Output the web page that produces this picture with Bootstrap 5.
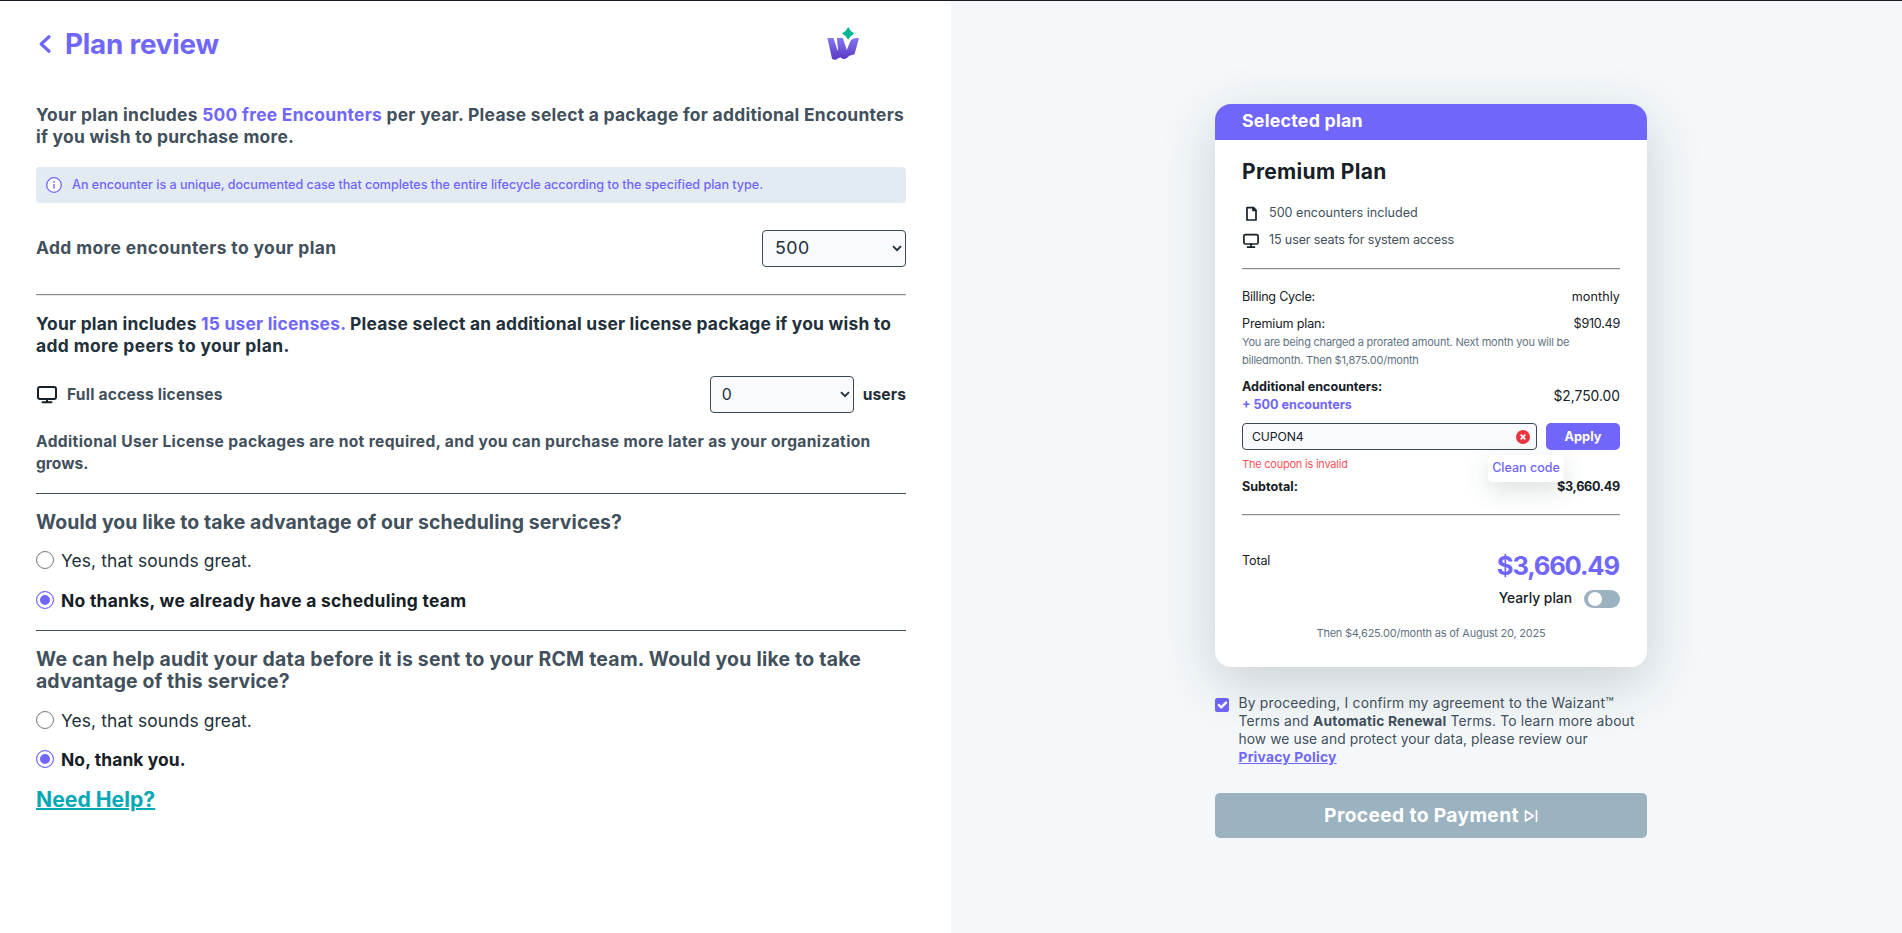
<!DOCTYPE html>
<html lang="en">
<head>
<meta charset="utf-8">
<meta name="viewport" content="width=device-width, initial-scale=1">
<title>Plan review</title>
<link href="https://cdn.jsdelivr.net/npm/bootstrap@5.3.0/dist/css/bootstrap.min.css" rel="stylesheet">
<style>
:root{--brand:#7166fa;--slate:#42505c;--ink:#22303a;--dark:#162026}
body{font-family:Inter,"Liberation Sans",sans-serif;color:var(--dark);background:#fff}
.screen{height:933px;border-top:1px solid #1d1a24;overflow:hidden}
.pane-left{width:951px;padding:19px 45px 0 36px}
.pane-right{width:951px;background:#f4f8fb;padding:103px 0 0 264px}
.c-brand{color:var(--brand)}.c-slate{color:var(--slate)}.c-ink{color:var(--ink)}.c-dark{color:var(--dark)}
/* vertical rhythm and tracking */
.mt-a{margin-top:17px}.mt-b{margin-top:18px}.mt-c{margin-top:19px}.mt-d{margin-top:20px}.mt-e{margin-top:21px}
.mt-f{margin-top:22px}.mt-g{margin-top:27px}.mt-h{margin-top:36px}.mt-s{margin-top:9px}.mt-xs{margin-top:5px}
.ls-n{letter-spacing:-.02em}.ls-m{letter-spacing:-.0125em}.ls-0{letter-spacing:0}.ls-1{letter-spacing:.006em}.ls-2{letter-spacing:.013em}.ls-3{letter-spacing:.0165em}.ls-4{letter-spacing:.0225em}
.page-head{height:48px}
.page-title{font-size:27.8px;font-weight:700;line-height:48px;letter-spacing:-.008em}
.back{margin-right:-1px}
.brand-mark{margin-right:47px}
.t18{font-size:17.4px;line-height:22px;font-weight:700}
.t16{font-size:15.6px;line-height:22px;font-weight:700}
.t20{font-size:19.4px;line-height:22px;font-weight:700}
.note{height:36px;background:#e2eaf2;border-radius:4px;font-size:12.6px;padding:0 10px;gap:10px;font-weight:500;letter-spacing:-.0025em}
.pick{width:144px;height:37px;border:1px solid #3c4955;border-radius:4px;background-color:#f8fafd;color:var(--ink);padding:0 24px 0 11px;font-size:15.8px;background-image:url("data:image/svg+xml,%3Csvg xmlns='http://www.w3.org/2000/svg' viewBox='0 0 10 7' fill='none' stroke='%2322303a' stroke-width='1.900'%3E%3Cpath d='M1 1.200l4 4 4-4'/%3E%3C/svg%3E");background-size:10px 7px;background-position:right 3px center}
.pick-lg{font-size:17.8px;padding-left:12px;letter-spacing:.03em}
.rule{height:2px;border-top:1px solid #8b8b8b;border-bottom:1px solid #e8e8e8}
.line{height:1px;background:#46535f}
.opt{height:18px;gap:7px;font-size:17.4px;line-height:18px;color:var(--ink)}
.opt .form-check-input{width:18px;height:18px;margin:0;flex:none;border:1px solid #767676}
.opt .form-check-input:checked{background-color:var(--brand);background-image:none;border-color:var(--brand);box-shadow:inset 0 0 0 3px #fff}
.opt label{padding-top:1px}
.seat-icon{margin-right:9px}
.users{margin-left:9px}
.up{margin-top:-2px}
.help{font-size:21.2px;line-height:24px;font-weight:700;color:#05a8b5;text-decoration-thickness:2px}
.plan{width:432px;height:563px;border:0;border-radius:16px;box-shadow:0 16px 56px rgba(25,45,50,.2)}
.plan-head{height:36px;background:var(--brand);color:#fff;font-weight:700;font-size:17.8px;line-height:34px;padding:0 27px;border-radius:16px 16px 0 0;letter-spacing:.013em}
.plan-body{padding:20px 27px 0}
.plan-name{font-size:21px;font-weight:700;line-height:24px;letter-spacing:.015em}
.t13{font-size:12.6px;line-height:18px}
.t11{font-size:11px;line-height:18px;color:#5f7383;letter-spacing:-.02em}
.t14{font-size:13.8px;line-height:18px}
.feat{gap:9px}
.feat svg{flex:none}
.coupon{height:27px;width:295px;border:1px solid #3c4955;border-radius:4px;background:#f8fafd;padding:0 6px 0 9px;font-size:12.2px;line-height:25px;letter-spacing:-.009em}
.btn-apply{width:74px;height:27px;background:var(--brand);color:#fff;border-radius:5px;font-size:12.8px;line-height:18px;padding:0}
.clean{top:32px;left:246px;width:76px;height:27px;border-radius:5px;font-size:12.5px;line-height:26px;box-shadow:0 8px 24px rgba(40,60,60,.16);z-index:2}
.err{color:#f5525a}
.total-row{margin-top:34px;height:30px}
.total{font-size:25.6px;line-height:31px;font-weight:700;letter-spacing:-.047em}
.total span{letter-spacing:0}
.total-label{padding-top:2px}
.toggle{width:36px;height:18px;border-radius:9px;background:#9bb2c0;padding:2px 4px;margin-top:1px}
.toggle i{width:14px;height:14px;border-radius:50%;background:#fff}
.after{margin-top:16px}
.terms{gap:9.5px;margin-top:27px;width:432px}
.terms .form-check-input{width:14px;height:14px;border-radius:2px;margin:4px 0 0;flex:none;background-size:16px 16px}
.terms .form-check-input:checked{background-color:var(--brand);border-color:var(--brand)}
.btn-pay{width:432px;height:45px;border-radius:5px;background:#9bb2c0;color:#fff;font-size:19.3px;padding:0;gap:5px;margin-top:27px;letter-spacing:.017em}
.btn-pay:hover,.btn-apply:hover{color:#fff}
</style>
</head>
<body>
<div class="screen d-flex">
<main class="pane-left">
  <header class="page-head d-flex align-items-center">
    <svg class="back" width="30" height="24" viewBox="0 0 30 24" fill="none" stroke="#7166fa" stroke-width="3.200" stroke-linecap="round" stroke-linejoin="round"><path d="M13 4.800 5.200 12l7.800 7.200"/></svg>
    <h1 class="page-title c-brand mb-0">Plan review</h1>
    <svg class="brand-mark ms-auto" width="32" height="34" viewBox="0 0 32 34"><defs><linearGradient id="wg" x1="0" y1="0" x2="0" y2="1"><stop offset="0" stop-color="#8577f0"/><stop offset="1" stop-color="#5a37c4"/></linearGradient></defs><path fill="url(#wg)" d="M.4 11H6.500l4 12.500.6-1.200L9.800 11h6l4 12L23 15c1.200-2.800 3-4 9-4l-4.400 16c-2.200 1.500-3.900.8-5.600 2-2.700 3.500-5.900 3.800-8.200 1.500-2.200.2-3 1.200-4.500 1.900-1.800.8-3.800.2-4.300-.8z"/><path fill="#06b794" d="M21.200 0q2 4.500 6.200 6.500-4.200 2-6.200 6.300Q19.200 8.500 15 6.500 19.200 4.500 21.200 0z"/></svg>
  </header>

  <p class="t18 c-slate ls-3 mt-h mb-0">Your plan includes <span class="c-brand">500 free Encounters</span> per year. Please select a package for additional Encounters<br>if you wish to purchase more.</p>
  <div class="note c-brand d-flex align-items-center mt-c">
    <svg width="16" height="16" viewBox="0 0 16 16"><circle cx="8" cy="8" r="7.300" fill="#fff" stroke="#7166fa" stroke-width="1.300"/><path d="M8 7v4.500" stroke="#7166fa" stroke-width="1.400"/><circle cx="8" cy="4.900" r=".9" fill="#7166fa"/></svg>
    <span>An encounter is a unique, documented case that completes the entire lifecycle according to the specified plan type.</span>
  </div>
  <div class="d-flex align-items-center justify-content-between mt-g">
    <label class="t18 c-slate ls-4 up" for="enc">Add more encounters to your plan</label>
    <select id="enc" class="form-select pick pick-lg"><option>500</option></select>
  </div>
  <div class="rule mt-g"></div>

  <p class="t18 c-ink ls-2 mt-a mb-0">Your plan includes <span class="c-brand">15 user licenses.</span> Please select an additional user license package if you wish to<br><span class="ls-4">add more peers to your plan.</span></p>
  <div class="d-flex align-items-center mt-c">
    <svg class="seat-icon" width="22" height="22" viewBox="0 0 22 22" fill="none" stroke="#162026" stroke-width="2" stroke-linecap="round"><rect x="2" y="3" width="18" height="12" rx="2"/><path d="M11 15v3M6.500 18.300h9"/></svg>
    <span class="t16 c-slate ls-2">Full access licenses</span>
    <select class="form-select pick ms-auto" aria-label="Users"><option>0</option></select>
    <span class="t16 c-ink ls-1 users">users</span>
  </div>
  <p class="t16 c-slate mt-b mb-0"><span class="ls-4">Additional User License packages are not required, and you can purchase more later as your organization</span><br><span class="ls-0">grows.</span></p>
  <div class="line mt-b"></div>

  <h2 class="t20 c-slate mt-a mb-0 ls-1">Would you like to take advantage of our scheduling services?</h2>
  <div class="opt d-flex mt-b"><input class="form-check-input" type="radio" name="sched" id="s1"><label class="ls-1" for="s1">Yes, that sounds great.</label></div>
  <div class="opt d-flex mt-f"><input class="form-check-input" type="radio" name="sched" id="s2" checked><label class="fw-bold c-dark ls-3" for="s2">No thanks, we already have a scheduling team</label></div>
  <div class="line mt-e"></div>

  <h2 class="t20 c-slate mt-a mb-0"><span class="ls-2">We can help audit your data before it is sent to your RCM team. Would you like to take</span><br><span class="ls-1">advantage of this service?</span></h2>
  <div class="opt d-flex mt-c"><input class="form-check-input" type="radio" name="audit" id="a1"><label class="ls-1" for="a1">Yes, that sounds great.</label></div>
  <div class="opt d-flex mt-e"><input class="form-check-input" type="radio" name="audit" id="a2" checked><label class="fw-bold c-dark ls-1" for="a2">No, thank you.</label></div>
  <a class="help d-inline-block mt-c" href="#">Need Help?</a>
</main>

<aside class="pane-right">
  <section class="card plan">
    <div class="plan-head">Selected plan</div>
    <div class="plan-body">
      <div class="plan-name">Premium Plan</div>
      <div class="t13 c-slate feat d-flex align-items-center mt-d">
        <svg width="18" height="18" viewBox="0 0 18 18" fill="none" stroke="#162026" stroke-width="1.700" stroke-linejoin="round"><path d="M5 3.700h6.500l2.500 2.500v9.800H5zM11 4v2.500h3"/></svg>
        <span>500 encounters included</span>
      </div>
      <div class="t13 c-slate feat d-flex align-items-center mt-s">
        <svg width="18" height="18" viewBox="0 0 18 18" fill="none" stroke="#162026" stroke-width="1.700" stroke-linecap="round"><rect x="1.900" y="3.700" width="14.200" height="9.300" rx="1.500"/><path d="M9 13v3M5.500 16.100h7"/></svg>
        <span class="ls-m">15 user seats for system access</span>
      </div>
      <div class="rule mt-c"></div>
      <div class="t13 d-flex justify-content-between mt-b"><span class="ls-n">Billing Cycle:</span><span class="ls-1">monthly</span></div>
      <div class="t13 d-flex justify-content-between mt-s"><span class="ls-m">Premium plan:</span><span class="ls-n">$910.49</span></div>
      <div class="t11 text-nowrap">You are being charged a prorated amount. Next month you will be<br>billedmonth. Then $1,875.00/month</div>
      <div class="t13 d-flex justify-content-between align-items-center mt-s">
        <div class="fw-bold">Additional encounters:<br><span class="c-brand">+ 500 encounters</span></div>
        <span class="t14">$2,750.00</span>
      </div>
      <div class="d-flex justify-content-between position-relative mt-s">
        <div class="coupon d-flex align-items-center justify-content-between">CUPON4
          <svg width="14" height="14" viewBox="0 0 14 14"><circle cx="7" cy="7" r="7" fill="#ea3440"/><path d="m4.700 4.700 4.600 4.600M9.300 4.700 4.700 9.300" stroke="#fff" stroke-width="1.700"/></svg>
        </div>
        <button class="btn btn-apply fw-bold">Apply</button>
        <div class="clean position-absolute bg-white text-center c-brand fw-medium">Clean code</div>
      </div>
      <div class="t11 err mt-xs">The coupon is invalid</div>
      <div class="t13 fw-bold d-flex justify-content-between mt-xs"><span>Subtotal:</span><span class="ls-n">$3,660.49</span></div>
      <div class="rule mt-b"></div>
      <div class="total-row d-flex justify-content-between"><span class="t13 total-label ls-m">Total</span><span class="total c-brand">$3,660.4<span>9</span></span></div>
      <div class="d-flex justify-content-end mt-s"><span class="t14 fw-medium me-2 pe-1">Yearly plan</span><span class="toggle d-flex"><i></i></span></div>
      <div class="t11 text-center after">Then $4,625.00/month as of August 20, 2025</div>
    </div>
  </section>
  <div class="terms d-flex">
    <input class="form-check-input" type="checkbox" id="ok" checked>
    <label class="t14 c-slate text-nowrap" for="ok"><span class="ls-3">By proceeding, I confirm my agreement to the Waizant™</span><br><span class="ls-2">Terms and <b>Automatic Renewal</b> Terms. To learn more about</span><br><span class="ls-1">how we use and protect your data, please review our</span><br><a class="c-brand fw-bold ls-3" href="#">Privacy Policy</a></label>
  </div>
  <button class="btn btn-pay fw-bold d-flex align-items-center justify-content-center">Proceed to Payment
    <svg width="14" height="14" viewBox="0 0 14 14" fill="none" stroke="#fff" stroke-width="1.700" stroke-linejoin="round"><path d="M1.500 2v10L9.500 7zM12.500 1v12"/></svg>
  </button>
</aside>
</div>
<script src="https://cdn.jsdelivr.net/npm/bootstrap@5.3.0/dist/js/bootstrap.bundle.min.js"></script>
</body>
</html>
